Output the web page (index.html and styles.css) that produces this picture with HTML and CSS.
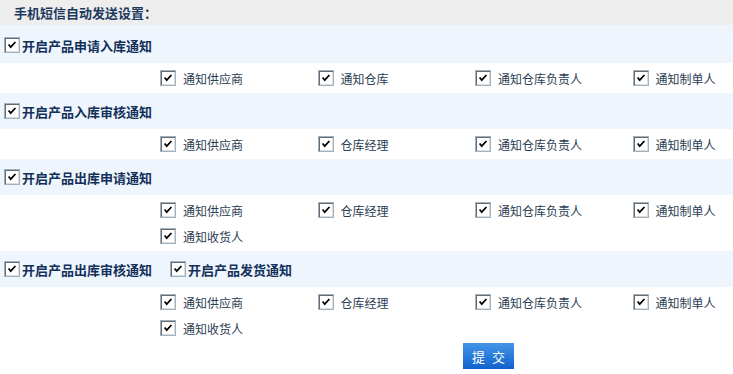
FILE: index.html
```
<!DOCTYPE html>
<html lang="zh-CN">
<head>
    <meta charset="UTF-8">
    <title>短信设置</title>
    <link rel="stylesheet" href="styles.css">
</head>
<body>

    <div class="panel">
        <div class="title">手机短信自动发送设置：</div>

        <!-- 入库申请 -->
        <div class="sec-head first">
            <label class="main-opt"><span class="cb"><svg viewBox="0 0 14 14"><path d="M3 6.5 L5.5 9.5 L11 3.5"/></svg></span>开启产品申请入库通知</label>
        </div>
        <div class="sec-items">
            <label class="opt"><span class="cb"><svg viewBox="0 0 14 14"><path d="M3 6.5 L5.5 9.5 L11 3.5"/></svg></span>通知供应商</label>
            <label class="opt"><span class="cb"><svg viewBox="0 0 14 14"><path d="M3 6.5 L5.5 9.5 L11 3.5"/></svg></span>通知仓库</label>
            <label class="opt"><span class="cb"><svg viewBox="0 0 14 14"><path d="M3 6.5 L5.5 9.5 L11 3.5"/></svg></span>通知仓库负责人</label>
            <label class="opt"><span class="cb"><svg viewBox="0 0 14 14"><path d="M3 6.5 L5.5 9.5 L11 3.5"/></svg></span>通知制单人</label>
        </div>

        <!-- 入库审核 -->
        <div class="sec-head">
            <label class="main-opt"><span class="cb"><svg viewBox="0 0 14 14"><path d="M3 6.5 L5.5 9.5 L11 3.5"/></svg></span>开启产品入库审核通知</label>
        </div>
        <div class="sec-items">
            <label class="opt"><span class="cb"><svg viewBox="0 0 14 14"><path d="M3 6.5 L5.5 9.5 L11 3.5"/></svg></span>通知供应商</label>
            <label class="opt"><span class="cb"><svg viewBox="0 0 14 14"><path d="M3 6.5 L5.5 9.5 L11 3.5"/></svg></span>仓库经理</label>
            <label class="opt"><span class="cb"><svg viewBox="0 0 14 14"><path d="M3 6.5 L5.5 9.5 L11 3.5"/></svg></span>通知仓库负责人</label>
            <label class="opt"><span class="cb"><svg viewBox="0 0 14 14"><path d="M3 6.5 L5.5 9.5 L11 3.5"/></svg></span>通知制单人</label>
        </div>

        <!-- 出库申请 -->
        <div class="sec-head">
            <label class="main-opt"><span class="cb"><svg viewBox="0 0 14 14"><path d="M3 6.5 L5.5 9.5 L11 3.5"/></svg></span>开启产品出库申请通知</label>
        </div>
        <div class="sec-items">
            <label class="opt"><span class="cb"><svg viewBox="0 0 14 14"><path d="M3 6.5 L5.5 9.5 L11 3.5"/></svg></span>通知供应商</label>
            <label class="opt"><span class="cb"><svg viewBox="0 0 14 14"><path d="M3 6.5 L5.5 9.5 L11 3.5"/></svg></span>仓库经理</label>
            <label class="opt"><span class="cb"><svg viewBox="0 0 14 14"><path d="M3 6.5 L5.5 9.5 L11 3.5"/></svg></span>通知仓库负责人</label>
            <label class="opt"><span class="cb"><svg viewBox="0 0 14 14"><path d="M3 6.5 L5.5 9.5 L11 3.5"/></svg></span>通知制单人</label>
            <label class="opt"><span class="cb"><svg viewBox="0 0 14 14"><path d="M3 6.5 L5.5 9.5 L11 3.5"/></svg></span>通知收货人</label>
        </div>

        <!-- 出库审核 / 发货 -->
        <div class="sec-head">
            <label class="main-opt"><span class="cb"><svg viewBox="0 0 14 14"><path d="M3 6.5 L5.5 9.5 L11 3.5"/></svg></span>开启产品出库审核通知</label>
            <label class="main-opt"><span class="cb"><svg viewBox="0 0 14 14"><path d="M3 6.5 L5.5 9.5 L11 3.5"/></svg></span>开启产品发货通知</label>
        </div>
        <div class="sec-items">
            <label class="opt"><span class="cb"><svg viewBox="0 0 14 14"><path d="M3 6.5 L5.5 9.5 L11 3.5"/></svg></span>通知供应商</label>
            <label class="opt"><span class="cb"><svg viewBox="0 0 14 14"><path d="M3 6.5 L5.5 9.5 L11 3.5"/></svg></span>仓库经理</label>
            <label class="opt"><span class="cb"><svg viewBox="0 0 14 14"><path d="M3 6.5 L5.5 9.5 L11 3.5"/></svg></span>通知仓库负责人</label>
            <label class="opt"><span class="cb"><svg viewBox="0 0 14 14"><path d="M3 6.5 L5.5 9.5 L11 3.5"/></svg></span>通知制单人</label>
            <label class="opt"><span class="cb"><svg viewBox="0 0 14 14"><path d="M3 6.5 L5.5 9.5 L11 3.5"/></svg></span>通知收货人</label>
        </div>

        <div class="actions">
            <button class="btn-submit">提 交</button>
        </div>
    </div>

</body>
</html>
```

FILE: styles.css
```
body {
    margin: 0;
    padding: 0;
    background-color: #fff;
    font-family: "Noto Sans CJK SC", "Noto Sans", sans-serif;
    font-size: 12px;
    color: #2b3d52;
}
.title {
    height: 25px;
    line-height: 25px;
    padding-left: 14px;
    background-color: #eeeeee;
    font-size: 13px;
    font-weight: bold;
    color: #1d3a5e;
}
.sec-head {
    height: 36px;
    display: flex;
    align-items: center;
    gap: 18px;
    padding-left: 4px;
    background-color: #eef5fc;
}
.sec-head.first {
    padding-top: 2px;
}
.main-opt {
    display: flex;
    align-items: center;
    gap: 2px;
    font-size: 13px;
    font-weight: bold;
    color: #12305a;
}
.sec-items {
    display: grid;
    grid-template-columns: repeat(3, 157.5px) auto;
    grid-auto-rows: 26px;
    padding: 2px 0 2px 160px;
}
.opt {
    display: flex;
    align-items: center;
    gap: 7px;
    color: #2b3d52;
}
.cb {
    width: 12px;
    height: 12px;
    border: 1px solid #9fb2c2;
    padding: 1px;
    background-color: #fff;
    box-shadow: inset 1px 1px 0 #6a6a6a, inset -1px -1px 0 #dcdcdc;
    display: flex;
    align-items: center;
    justify-content: center;
}
.cb svg {
    width: 12px;
    height: 12px;
}
.cb path {
    fill: none;
    stroke: #000;
    stroke-width: 2;
}
.actions {
    padding-left: 463px;
}
.btn-submit {
    width: 51px;
    height: 26px;
    border: none;
    padding: 0;
    background: linear-gradient(#4496e8, #1062cb);
    color: #fff;
    font-family: "Noto Sans CJK SC", sans-serif;
    font-size: 13px;
    letter-spacing: 2px;
    text-indent: 2px;
    cursor: pointer;
}
```
